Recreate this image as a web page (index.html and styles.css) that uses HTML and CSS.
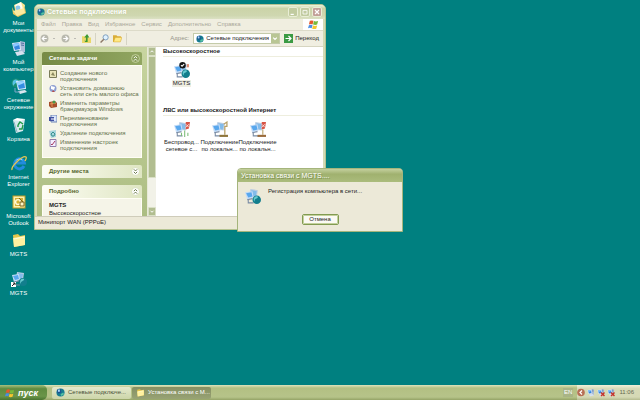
FILE: index.html
```html
<!DOCTYPE html>
<html lang="ru">
<head>
<meta charset="utf-8">
<title>Сетевые подключения</title>
<link rel="stylesheet" href="styles.css">
</head>
<body>
<svg class="defs" aria-hidden="true">
  <symbol id="docs" viewBox="0 0 16 16">
    <path d="M3 4 10 1l4 3-1 8-8 2z" fill="#f6e48e"/><path d="M4 4l6-3 2 7-6 3z" fill="#fffdf0"/>
    <path d="M1 6l3 6 10-5 1 5-8 4-5-3z" fill="#edc85a"/><circle cx="7" cy="7" r="2.4" fill="#8cc7ea"/><path d="M2 10l11-3 1 5-8 3z" fill="#faeaa0"/>
  </symbol>
  <symbol id="computer" viewBox="0 0 16 16">
    <path d="M9 1l5 1v10l-4 2-2-2z" fill="#a9bdd8"/><path d="M10 3l3 .5M10 5l3 .5" stroke="#5372a4"/>
    <path d="M1 3l8-1 1 8-7 1z" fill="#dce8fa"/><path d="M2 4l6-1 1 6-5 1z" fill="#3686df"/><path d="M2 4l6-1 .4 2-5.8 2z" fill="#8bc7ff"/>
    <path d="M4 12l7-1 3 3-8 2z" fill="#d6e0ee"/>
  </symbol>
  <symbol id="network" viewBox="0 0 16 16">
    <circle cx="5" cy="5" r="4.500" fill="#1a8c72"/><path d="M2 3c3-3 5-1 5 0S4 5 3 7 1 5 2 3z" fill="#57c3e5"/>
    <path d="M5 3l9-1 1 9-8 1z" fill="#dcecff"/><path d="M6 4l7-1 1 7-6 1z" fill="#358de2"/><path d="M6 4l7-1v2l-7 3z" fill="#9ad4ff"/>
    <path d="M7 13l7-1 2 2-7 2z" fill="#dbe5ef"/><path d="M4 10v4h5" stroke="#80a7c7" fill="none"/>
  </symbol>
  <symbol id="bin" viewBox="0 0 16 16">
    <path d="M2 3l12-1-2 12-7 2z" fill="#d4e9ee"/><path d="M2 3l4-2 8 1-4 2z" fill="#fff"/><path d="M3 5l3 10" stroke="#8fb0bd"/>
    <path d="M7 8l2-3 3 2M12 8l-1 4H8M7 10v-2" stroke="#219b46" stroke-width="1.4" fill="none"/>
  </symbol>
  <symbol id="ie" viewBox="0 0 16 16">
    <path d="M13 11a5 5 0 1 1 .4-3H5" fill="none" stroke="#238bdd" stroke-width="3"/><path d="M4.500 6a5 5 0 0 1 7-1" fill="none" stroke="#84d1ff"/>
    <path d="M1 15C0 11 12 0 15 2c1 1-.5 3-1 4" fill="none" stroke="#e8c650" stroke-width="1.3"/>
  </symbol>
  <symbol id="outlook" viewBox="0 0 16 16">
    <rect x="2" y="2" width="12" height="12" fill="#fbf2b1" stroke="#c39c20"/><path d="M4 4h8v8H4z" fill="#d4b136"/>
    <circle cx="7" cy="8" r="2.4" fill="none" stroke="#fff9d8" stroke-width="1.4"/><path d="M8 4l4 4M9 8h4v4H9z" stroke="#7c651d" fill="#fff6c8"/>
  </symbol>
  <symbol id="folder" viewBox="0 0 16 16">
    <path d="M2 3l5-1 2 2 5-1v10L3 15z" fill="#e5c64c"/><path d="M2 6l12-2v9L3 15z" fill="#fff1a0"/><path d="M3 7l10-2" stroke="#fffbd8"/>
  </symbol>
  <symbol id="pair" viewBox="0 0 16 16">
    <path d="M6 1l7 1-1 7-7-1z" fill="#b9cce2"/><path d="M7 2l5 1-1 5-5-1z" fill="#82bbea"/>
    <path d="M1 4l7-1 1 6-6 2z" fill="#c4dcf7"/><path d="M2 5l5-1 1 4-4 1z" fill="#58a7ed"/>
    <path d="M3 11l5-1M4 11v3h5" stroke="#7a8ca4" fill="none"/>
  </symbol>
  <symbol id="dial" viewBox="0 0 16 16">
    <use href="#pair"/><circle cx="12" cy="11" r="4" fill="#127e8d"/><path d="M9.500 9c2-2 4-1 3.500 0S10 10 10 12 8.500 11 9.500 9z" fill="#67cbd0"/>
  </symbol>
  <symbol id="globe" viewBox="0 0 10 10">
    <circle cx="5" cy="5" r="4.500" fill="#177b91"/><path d="M1 2l4-1 1 4-4 1z" fill="#1c4f91"/><path d="M2 2l2-.5.5 2.500-2 .5z" fill="#a9dcff"/><path d="M5 7l3-2 1 2-3 2z" fill="#55c1a2"/>
  </symbol>
  <symbol id="flag" viewBox="0 0 12 12">
    <path d="M2 2q2-1 4 0L5 6Q3 5 1 6z" fill="#e5582e"/><path d="M6.500 2.300q2 1 4.500 0L10 6q-2 1-4.500 0z" fill="#78b93a"/>
    <path d="M1 6.700q2-1 4 0L4 10Q2 9 0 10z" fill="#4b8de4"/><path d="M5.500 7q2 1 4.500 0L9 10.500q-2 1-4.500 0z" fill="#f5c62e"/>
  </symbol>
  <symbol id="chevdown" viewBox="0 0 8 8"><circle cx="4" cy="4" r="3.500" fill="#fff" stroke="#ccd6aa" stroke-width=".6"/><path d="M2.500 2L4 3.500 5.500 2M2.500 4.300L4 5.800 5.500 4.300" fill="none" stroke="#596b35" stroke-width=".8"/></symbol>
  <symbol id="chevup" viewBox="0 0 8 8"><circle cx="4" cy="4" r="3.500" fill="#fff" stroke="#ccd6aa" stroke-width=".6"/><path d="M2.500 3.700L4 2.200 5.500 3.700M2.500 6L4 4.500 5.500 6" fill="none" stroke="#596b35" stroke-width=".8"/></symbol>
  <symbol id="chevlight" viewBox="0 0 8 8"><circle cx="4" cy="4" r="3.500" fill="#8a9f5b" stroke="#dce5bd" stroke-width=".6"/><path d="M2.500 3.700L4 2.200 5.500 3.700M2.500 6L4 4.500 5.500 6" fill="none" stroke="#fff" stroke-width=".8"/></symbol>
  <symbol id="arrowl" viewBox="0 0 8 8"><circle cx="4" cy="4" r="3.500" fill="#b9b9ae"/><path d="M6 4H2.500M4 2L2 4l2 2" fill="none" stroke="#fff"/></symbol>
  <symbol id="arrowr" viewBox="0 0 8 8"><circle cx="4" cy="4" r="3.500" fill="#b9b9ae"/><path d="M2 4h3.500M4 2l2 2-2 2" fill="none" stroke="#fff"/></symbol>
</svg>

<main class="desktop">
  <nav class="icons" aria-label="Рабочий стол">
    <a class="shortcut" href="#"><svg><use href="#docs"/></svg><span>Мои<br>документы</span></a>
    <a class="shortcut" href="#"><svg><use href="#computer"/></svg><span>Мой<br>компьютер</span></a>
    <a class="shortcut" href="#"><svg><use href="#network"/></svg><span>Сетевое<br>окружение</span></a>
    <a class="shortcut" href="#"><svg><use href="#bin"/></svg><span>Корзина</span></a>
    <a class="shortcut" href="#"><svg><use href="#ie"/></svg><span>Internet<br>Explorer</span></a>
    <a class="shortcut" href="#"><svg><use href="#outlook"/></svg><span>Microsoft<br>Outlook</span></a>
    <a class="shortcut" href="#"><svg><use href="#folder"/></svg><span>MGTS</span></a>
    <a class="shortcut" href="#"><svg viewBox="0 0 16 16"><use href="#dial"/><path d="M0 11h5v5H0z" fill="#fff"/><path d="M1 15l3-3M2 12h2v2" stroke="#222" fill="none"/></svg><span>MGTS</span></a>
  </nav>

  <section class="window explorer">
    <header class="titlebar">
      <svg class="mini"><use href="#globe"/></svg>
      <h1>Сетевые подключения</h1>
      <button class="cap" aria-label="Свернуть"><svg viewBox="0 0 10 10"><path d="M2 8h4" stroke="#fff" stroke-width="1.500"/></svg></button>
      <button class="cap" aria-label="Развернуть"><svg viewBox="0 0 10 10"><path d="M2.500 3h5v4.500h-5z" stroke="#fff" fill="none"/></svg></button>
      <button class="cap close" aria-label="Закрыть"><svg viewBox="0 0 10 10"><path d="M2.500 2.500l5 5M7.500 2.500l-5 5" stroke="#fff" stroke-width="1.500"/></svg></button>
    </header>
    <div class="menubar">
      <button>Файл</button><button>Правка</button><button>Вид</button><button>Избранное</button><button>Сервис</button><button>Дополнительно</button><button>Справка</button>
      <span class="brand"><svg><use href="#flag"/></svg></span>
    </div>
    <div class="toolbar">
      <button class="tool" aria-label="Назад"><svg><use href="#arrowl"/></svg><i></i></button>
      <button class="tool" aria-label="Вперед"><svg><use href="#arrowr"/></svg><i></i></button>
      <button class="tool" aria-label="Вверх"><svg viewBox="0 0 8 8"><path d="M0 2h3l1 1h4v5H0z" fill="#ead76a"/><path d="M3 7h2V3h1.500L4.500 0 2 3h1.500v3H2z" fill="#3c9931"/></svg></button>
      <span class="rule"></span>
      <button class="tool" aria-label="Поиск"><svg viewBox="0 0 8 8"><circle cx="5" cy="3" r="2.300" fill="#def1ff" stroke="#7797b7" stroke-width=".8"/><path d="M3.400 4.600L.5 7.500" stroke="#8d7867" stroke-width="1.200"/></svg></button>
      <button class="tool" aria-label="Папки"><svg viewBox="0 0 8 8"><path d="M0 1h3l1 1h3v2H2L1 7H0z" fill="#d9ad38"/><path d="M2 3h6L6.500 7H.5z" fill="#ffe985" stroke="#d9ad38" stroke-width=".5"/></svg></button>
      <span class="rule"></span>
      <label class="addrlabel" for="addr">Адрес:</label>
      <span class="address"><svg class="mini"><use href="#globe"/></svg>
        <select id="addr"><option>Сетевые подключения</option></select>
        <span class="drop"><svg viewBox="0 0 7 10"><path d="M1.500 4l2 2 2-2" fill="none" stroke="#fff" stroke-width="1.300"/></svg></span>
      </span>
      <button class="go"><svg viewBox="0 0 9 9"><path d="M0 0h9v9H0z" fill="#3a9a43"/><path d="M1.500 4.500h5M4.500 2l2.500 2.500L4.500 7" fill="none" stroke="#fff" stroke-width="1.200"/></svg>Переход</button>
    </div>
    <div class="content">
      <aside class="tasks">
        <section class="panel primary">
          <h2>Сетевые задачи<svg><use href="#chevlight"/></svg></h2>
          <ul>
            <li><svg viewBox="0 0 8 8"><path d="M.5.5h7v7h-7z" fill="#e9e5b9" stroke="#7a7b59"/><path d="M2 5l2-3 2 4z" fill="#89875d"/></svg><a href="#">Создание нового<br>подключения</a></li>
            <li><svg viewBox="0 0 8 8"><circle cx="4" cy="3.500" r="3.500" fill="#8d9ed2"/><path d="M2 1l4 1-1 3-3-1z" fill="#fff"/><path d="M4 5l2 2H3z" fill="#b64c48"/></svg><a href="#">Установить домашнюю<br>сеть или сеть малого офиса</a></li>
            <li><svg viewBox="0 0 8 8"><path d="M0 2l6-1 2 2v4L2 8 0 6z" fill="#a64f2c"/><path d="M1 4l6-1M3 2v5" stroke="#e69755"/><circle cx="5" cy="2" r="1.500" fill="#49984a"/></svg><a href="#">Изменить параметры<br>брандмауэра Windows</a></li>
            <li><svg viewBox="0 0 8 8"><path d="M2 0h6v7H2z" fill="#d6e3fa" stroke="#6d83b3"/><path d="M0 2h5v4H0z" fill="#4051a1"/><path d="M2 4h4" stroke="#fff"/></svg><a href="#">Переименование<br>подключения</a></li>
            <li><svg viewBox="0 0 8 8"><path d="M0 1l7-1v7l-5 1z" fill="#a9d5dc"/><path d="M2 4l2-2 2 2-1 2H3z" fill="none" stroke="#35918e"/></svg><a href="#">Удаление подключения</a></li>
            <li><svg viewBox="0 0 8 8"><path d="M1 .5h6v7H1z" fill="#f3efff" stroke="#8e7eaa"/><path d="M2 5l1 1 3-4" stroke="#a43961" fill="none"/></svg><a href="#">Изменение настроек<br>подключения</a></li>
          </ul>
        </section>
        <section class="panel"><h2>Другие места<svg><use href="#chevdown"/></svg></h2></section>
        <section class="panel"><h2>Подробно<svg><use href="#chevup"/></svg></h2>
          <div class="details"><b>MGTS</b><span>Высокоскоростное</span></div>
        </section>
      </aside>
      <div class="scroll"><span class="sbtn"><svg viewBox="0 0 8 8"><path d="M2 5l2-2 2 2" fill="none" stroke="#fff" stroke-width="1.300"/></svg></span><span class="thumb"></span><span class="sbtn"><svg viewBox="0 0 8 8"><path d="M2 3l2 2 2-2" fill="none" stroke="#fff" stroke-width="1.300"/></svg></span></div>
      <div class="files">
        <h2>Высокоскоростное</h2>
        <div class="row first"><a class="conn selected" href="#"><svg viewBox="0 0 16 16"><use href="#dial"/><circle cx="9" cy="3" r="3" fill="#151515"/><path d="M7.500 3l1 1 2-2" stroke="#fff" fill="none"/><path d="M13 2h2v3h-2z" fill="#db8a70"/></svg><span>MGTS</span></a></div>
        <h2>ЛВС или высокоскоростной Интернет</h2>
        <div class="row">
          <a class="conn" href="#"><svg viewBox="0 0 16 16"><use href="#pair"/><path d="M12 1h4l-1 6-3 1z" fill="#d85345"/><path d="M12 3l3 3M15 3l-3 3" stroke="#fff" stroke-width=".7"/><path d="M8 11v3M11 9v6M14 11v3" stroke="#7cbc79"/></svg><span>Беспровод...<br>сетевое с...</span></a>
          <a class="conn" href="#"><svg viewBox="0 0 16 16"><use href="#pair"/><path d="M12 3l3-2v4h-2v8" fill="none" stroke="#b9a066" stroke-width="1.200"/><path d="M8 14h8" stroke="#8f753b" stroke-width="2"/></svg><span>Подключение<br>по локальн...</span></a>
          <a class="conn" href="#"><svg viewBox="0 0 16 16"><use href="#pair"/><path d="M12 1h4l-1 6-3 1z" fill="#d85345"/><path d="M12 3l3 3M15 3l-3 3" stroke="#fff" stroke-width=".7"/><path d="M13 8v5" stroke="#b9a066"/><path d="M8 14h8" stroke="#9a6b3b" stroke-width="2"/></svg><span>Подключение<br>по локальн...</span></a>
        </div>
      </div>
    </div>
    <footer class="status">Минипорт WAN (PPPoE)</footer>
  </section>

  <section class="dialog" role="dialog" aria-labelledby="dlg">
    <h1 id="dlg">Установка связи с MGTS....</h1>
    <div class="message"><svg><use href="#dial"/></svg><p>Регистрация компьютера в сети...</p></div>
    <button class="cancel">Отмена</button>
  </section>
</main>

<footer class="taskbar">
  <button class="start"><svg><use href="#flag"/></svg>пуск</button>
  <button class="task"><svg><use href="#globe"/></svg>Сетевые подключе...</button>
  <button class="task active"><svg><use href="#folder"/></svg>Установка связи с M...</button>
  <span class="lang">EN</span>
  <div class="tray">
    <svg viewBox="0 0 8 8"><circle cx="4" cy="4" r="3.800" fill="#b76f55"/><path d="M5 2L3 4l2 2" fill="none" stroke="#fff" stroke-width="1.200"/></svg>
    <svg viewBox="0 0 16 16"><use href="#computer"/></svg>
    <svg viewBox="0 0 16 16"><use href="#computer"/><path d="M8 8l7 7M15 8l-7 7" stroke="#c4352b" stroke-width="3"/></svg>
    <svg viewBox="0 0 16 16"><use href="#computer"/><path d="M8 8l7 7M15 8l-7 7" stroke="#c4352b" stroke-width="3"/></svg>
    <time>11:06</time>
  </div>
</footer>
</body>
</html>
```
FILE: styles.css
```css
* { box-sizing: border-box; }
body {
  margin: 0;
  height: 100vh;
  display: flex;
  flex-direction: column;
  overflow: hidden;
  background: #008080;
  color: #222;
  font: 6px/7px "Liberation Sans", Arial, sans-serif;
}
h1, h2, p, ul { margin: 0; padding: 0; font-size: 6px; }
ul { list-style: none; }
p { font-weight: normal; }
a { color: inherit; text-decoration: none; }
button, select {
  font: inherit;
  color: inherit;
  border: 0;
  padding: 0;
  margin: 0;
  background: none;
  white-space: nowrap;
}
svg { flex: none; display: block; }
.defs { position: absolute; width: 0; height: 0; }

.desktop { position: relative; flex: 1; min-height: 0; }
.icons {
  display: grid;
  grid-template-rows: repeat(10, 1fr);
  width: 37px;
  height: 100%;
}
.shortcut {
  display: flex;
  flex-direction: column;
  align-items: center;
  gap: 3px;
  padding-top: 1px;
  color: #fff;
  text-align: center;
}
.shortcut svg { width: 16px; height: 16px; }

.window {
  position: absolute;
  left: 34px;
  top: 4px;
  width: 292px;
  display: flex;
  flex-direction: column;
  padding: 0 2px 1px;
  background: #d3dab5;
  border: 1px solid #b4c391;
  border-radius: 5px 5px 0 0;
}
.titlebar {
  display: flex;
  align-items: center;
  gap: 2px;
  height: 14px;
  margin: 0 -2px;
  padding: 0 3px 0 2px;
  border-radius: 4px 4px 0 0;
  background: linear-gradient(#eef3dc, #cbd4a8 25%, #cfd7b0 75%, #dbe1c3);
}
.titlebar h1 { flex: 1; color: #fff; font-size: 7px; line-height: 10px; text-shadow: 0 0 1px #b2bd8c; }
.mini { width: 8px; height: 8px; }
.cap { width: 10px; height: 10px; border-radius: 2px; border: 1px solid #e9eed6; background: #c1cba0; }
.cap svg { width: 8px; height: 8px; }
.close { background: #c2a098; }

.menubar {
  display: flex;
  align-items: center;
  gap: 6px;
  height: 12px;
  padding-left: 4px;
  background: #f0eee0;
  color: #aaa89a;
  border-bottom: 1px solid #dddbc9;
}
.brand { margin-left: auto; align-self: stretch; display: flex; align-items: center; justify-content: center; width: 20px; background: #fff; }
.brand svg { width: 11px; height: 11px; }
.toolbar {
  display: flex;
  align-items: center;
  gap: 4px;
  height: 16px;
  padding: 0 4px 0 3px;
  background: #f0eee1;
  border-bottom: 1px solid #d6d5c0;
}
.tool { display: flex; align-items: center; gap: 4px; }
.tool:nth-of-type(-n+2) { margin-right: 2px; }
.tool svg { width: 9px; height: 9px; }
.tool i { border: 1px solid transparent; border-top-color: #888; }
.rule { width: 1px; height: 12px; background: #d6d4c4; }
.addrlabel { margin-left: auto; color: #96958a; }
.address { display: flex; align-items: center; gap: 2px; width: 87px; height: 11px; padding-left: 2px; background: #fff; border: 1px solid #c4cba9; }
.address select { flex: 1; min-width: 0; appearance: none; height: 9px; }
.drop { width: 8px; height: 9px; background: #b9c694; }
.drop svg { width: 8px; height: 9px; }
.go { display: flex; align-items: center; gap: 2px; }
.go svg { width: 9px; height: 9px; }

.content { display: flex; height: 169px; background: #fff; }
.tasks {
  width: 110px;
  padding: 5px 5px 0;
  display: flex;
  flex-direction: column;
  gap: 7px;
  overflow: hidden;
  background: linear-gradient(#c8d5a0, #acbd82);
}
.panel { flex: none; }
.panel h2 {
  display: flex;
  align-items: center;
  justify-content: space-between;
  height: 13px;
  padding: 0 2px 0 7px;
  border-radius: 2px 2px 0 0;
  background: linear-gradient(90deg, #fdfdf4, #dfe6c3);
  color: #56662d;
}
.panel h2 svg { width: 9px; height: 9px; }
.panel.primary h2 { background: linear-gradient(90deg, #768a45, #91a661); color: #fff; }
.panel ul, .details { background: #f5f4e8; border: 1px solid #fffef5; }
.panel ul { display: flex; flex-direction: column; gap: 3px; height: 93px; padding: 4px 0 0 6px; color: #62704a; line-height: 6px; white-space: nowrap; }
.panel li { display: flex; gap: 3px; }
.panel li svg { width: 8px; height: 8px; margin-bottom: -2px; }
.details { display: flex; flex-direction: column; gap: 1px; padding: 3px 6px 0; }

.scroll { width: 9px; display: flex; flex-direction: column; background: #f2f2e8; border-left: 1px solid #e8ead8; }
.sbtn, .thumb { background: #b1bd90; border: 1px solid #d9dfc5; border-radius: 1px; }
.sbtn { height: 9px; }
.sbtn svg { width: 6px; height: 7px; }
.thumb { height: 122px; }
.scroll .sbtn:last-child { margin-top: auto; }

.files { flex: 1; min-width: 0; padding-left: 7px; }
.files h2 { height: 10px; padding-top: 1px; border-bottom: 1px solid #eeeede; color: #222; white-space: nowrap; }
.row { display: flex; gap: 1px; }
.first { height: 49px; }
.conn { display: flex; flex-direction: column; align-items: center; gap: 1px; width: 37px; padding-top: 5px; text-align: center; line-height: 7px; white-space: nowrap; }
.conn svg { width: 17px; height: 17px; }
.selected span { padding: 0 1px; background: #efeee2; }
.status { height: 13px; margin: 0 -2px -1px; padding: 2px 3px; background: #ece9d8; border-top: 1px solid #cfccba; }

.dialog {
  position: absolute;
  left: 237px;
  top: 168px;
  width: 166px;
  padding-bottom: 6px;
  border: 1px solid #a5b57c;
  border-radius: 4px 4px 0 0;
  background: #ece9d8;
}
.dialog h1 {
  height: 13px;
  padding: 2px 3px;
  border-radius: 3px 3px 0 0;
  background: linear-gradient(#c4d09e, #a0b16f 40%, #abbc7c);
  color: #fff;
  font-size: 7px;
  font-weight: normal;
  line-height: 10px;
  text-shadow: 1px 1px 0 #7d8f50;
}
.message { display: flex; gap: 7px; padding: 6px; }
.message svg { width: 17px; height: 17px; }
.cancel {
  display: block;
  width: 37px;
  height: 11px;
  margin: 3px auto 0;
  background: #fbfaf4;
  border: 1px solid #829b52;
  border-radius: 2px;
  outline: 1px solid #c3d19c;
  outline-offset: -2px;
}

.taskbar {
  display: flex;
  align-items: center;
  flex: none;
  height: 15px;
  background: linear-gradient(#dde4bd, #b3c083 20%, #b6c389 80%, #94a366);
}
.start {
  display: flex;
  align-items: center;
  justify-content: center;
  gap: 3px;
  width: 47px;
  height: 15px;
  margin-right: 5px;
  padding-right: 4px;
  border-radius: 0 5px 5px 0;
  background: linear-gradient(#a5c080, #5f8b3f 25%, #6a9549 75%, #497330);
  color: #fff;
  font-size: 9px;
  font-style: italic;
  font-weight: bold;
  line-height: 10px;
}
.start svg { width: 10px; height: 10px; }
.task {
  display: flex;
  align-items: center;
  gap: 3px;
  width: 79px;
  height: 12px;
  margin-right: 1px;
  padding-left: 4px;
  border-radius: 2px;
  background: linear-gradient(#e4e9cd, #ccd5a9);
  color: #4a5038;
}
.task svg { width: 9px; height: 9px; }
.task.active { background: linear-gradient(#858f62, #98a374); color: #fff; }
.lang { margin-left: auto; padding: 1px; background: #a9b486; color: #fff; }
.tray {
  display: flex;
  align-items: center;
  gap: 2px;
  height: 15px;
  margin-left: 4px;
  padding-right: 6px;
  background: linear-gradient(#f1f1da, #d7dab7 25%, #d5d9b5 80%, #b4bb8f);
  color: #66694f;
}
.tray svg { width: 8px; height: 9px; }
.tray time { margin-left: 2px; }
```
